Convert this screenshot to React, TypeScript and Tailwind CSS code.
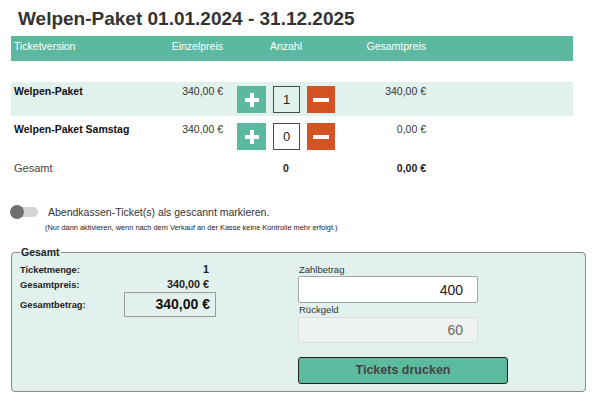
import React from "react";

type Row = {
  name: string;
  price: string;
  count: number;
  total: string;
  bg: string;
  height: string;
  textPad: string;
  btnPad: string;
};

const rows: Row[] = [
  {
    name: "Welpen-Paket",
    price: "340,00 €",
    count: 1,
    total: "340,00 €",
    bg: "bg-[#e1f1ed]",
    height: "h-[34px]",
    textPad: "pt-[2px]",
    btnPad: "pt-[4px]",
  },
  {
    name: "Welpen-Paket Samstag",
    price: "340,00 €",
    count: 0,
    total: "0,00 €",
    bg: "bg-white",
    height: "h-[40px]",
    textPad: "pt-[6px]",
    btnPad: "pt-[7px]",
  },
];

const PlusIcon = () => (
  <svg width="14" height="14" viewBox="0 0 14 14">
    <rect x="5" y="0" width="4" height="14" fill="#fff" />
    <rect x="0" y="5" width="14" height="4" fill="#fff" />
  </svg>
);

const MinusIcon = () => (
  <svg width="16" height="4" viewBox="0 0 16 4">
    <rect x="0" y="0" width="16" height="4" fill="#fff" />
  </svg>
);

export default function App() {
  return (
    <div
      className="w-[600px] h-[403px] bg-white text-[#333] overflow-hidden"
      style={{ fontFamily: '"Liberation Sans", Arial, sans-serif' }}
    >
      {/* Title */}
      <div className="pl-[18px] pt-[7px] h-[36px] text-[19px] leading-[23px] font-bold text-[#333]">
        Welpen-Paket 01.01.2024 - 31.12.2025
      </div>

      {/* Ticket table */}
      <div className="ml-[11px] w-[562px]">
        <div className="h-[25px] bg-[#5cb9a0] text-white text-[10.5px] leading-[14px] pt-[3px] px-[3px] flex">
          <div className="w-[140px]">Ticketversion</div>
          <div className="w-[69px] text-right">Einzelpreis</div>
          <div className="w-[126px] text-center">Anzahl</div>
          <div className="w-[77px] text-right">Gesamtpreis</div>
        </div>

        <div className="h-[21px]" />

        {rows.map((row) => (
          <div
            key={row.name}
            className={`${row.bg} ${row.height} flex items-start px-[3px] text-[10.5px] leading-[14px]`}
          >
            <div className={`w-[140px] font-bold text-[#111] ${row.textPad}`}>{row.name}</div>
            <div className={`w-[69px] text-right ${row.textPad}`}>{row.price}</div>
            <div className={`w-[126px] flex justify-center gap-[7px] ${row.btnPad}`}>
              <button className="w-[29px] h-[27px] bg-[#5cb9a0] flex items-center justify-center">
                <PlusIcon />
              </button>
              <div className="w-[27px] h-[27px] border-[1.5px] border-[#4a4a4a] flex items-center justify-center text-[13px] text-[#222]">
                {row.count}
              </div>
              <button className="w-[28px] h-[27px] bg-[#d35322] flex items-center justify-center">
                <MinusIcon />
              </button>
            </div>
            <div className={`w-[77px] text-right ${row.textPad}`}>{row.total}</div>
          </div>
        ))}

        <div className="h-[22px] flex items-start px-[3px] text-[10.5px] leading-[14px] pt-[5px]">
          <div className="w-[140px] text-[#444] text-[11px]">Gesamt</div>
          <div className="w-[69px]" />
          <div className="w-[126px] text-center font-bold text-[#222]">0</div>
          <div className="w-[77px] text-right font-bold text-[#222]">0,00 €</div>
        </div>
      </div>

      {/* Toggle */}
      <div className="pt-[26px]">
        <div className="flex items-center h-[16px]">
          <div className="ml-[10px] relative w-[28px] h-[14px] flex items-center">
            <div className="w-[28px] h-[10px] rounded-full bg-[#d4d4d4]" />
            <div className="absolute left-0 top-0 w-[14px] h-[14px] rounded-full bg-[#6f6f6f]" />
          </div>
          <span className="ml-[10px] text-[10.5px] leading-[16px] text-[#333]">
            Abendkassen-Ticket(s) als gescannt markieren.
          </span>
        </div>
        <div className="mt-[3px] ml-[45px] text-[7.4px] leading-[10px] text-[#222]">
          (Nur dann aktivieren, wenn nach dem Verkauf an der Kasse keine Kontrolle mehr erfolgt.)
        </div>
      </div>

      {/* Summary */}
      <fieldset className="mt-[13px] ml-[11px] w-[575px] border border-[#8a8a8a] rounded-[4px] bg-[#e2f1ed] px-[8px] pb-[7px]">
        <legend className="px-[1px] text-[10.5px] leading-[13px] font-bold text-[#222]">Gesamt</legend>
        <div className="flex">
          <div className="w-[196px] pt-[3px] text-[9.3px] leading-[14px] font-bold text-[#222]">
            <div className="flex justify-between items-baseline pr-[7px]">
              <span>Ticketmenge:</span>
              <span className="text-[10.8px]">1</span>
            </div>
            <div className="flex justify-between items-baseline pr-[7px]">
              <span>Gesamtpreis:</span>
              <span className="text-[10.8px]">340,00 €</span>
            </div>
            <div className="flex items-center">
              <span className="w-[104px]">Gesamtbetrag:</span>
              <div className="w-[92px] h-[25px] border border-[#9a9a9a] text-right pr-[5px] text-[14px] leading-[23px] font-bold text-[#111]">
                340,00 €
              </div>
            </div>
          </div>

          <div className="ml-[82px] w-[210px] pt-[4px]">
            <div className="text-[9.5px] leading-[13px] text-[#333] pl-[1px]">Zahlbetrag</div>
            <input
              className="block w-[180px] h-[27px] bg-white border border-[#a5a5a5] rounded-[2px] text-right pr-[14px] text-[14px] text-[#222] outline-none"
              defaultValue="400"
            />
            <div className="text-[9.5px] leading-[13px] text-[#333] pl-[1px]">Rückgeld</div>
            <input
              className="block mt-[1px] w-[180px] h-[26px] bg-[#eef2f0] border border-[#dcdfdd] rounded-[2px] text-right pr-[14px] text-[14px] text-[#666] outline-none"
              defaultValue="60"
              readOnly
            />
            <button className="mt-[14px] w-[210px] h-[27px] bg-[#5cba9f] border border-[#222] rounded-[3px] text-[12.5px] font-bold text-[#444]">
              Tickets drucken
            </button>
          </div>
        </div>
      </fieldset>
    </div>
  );
}
